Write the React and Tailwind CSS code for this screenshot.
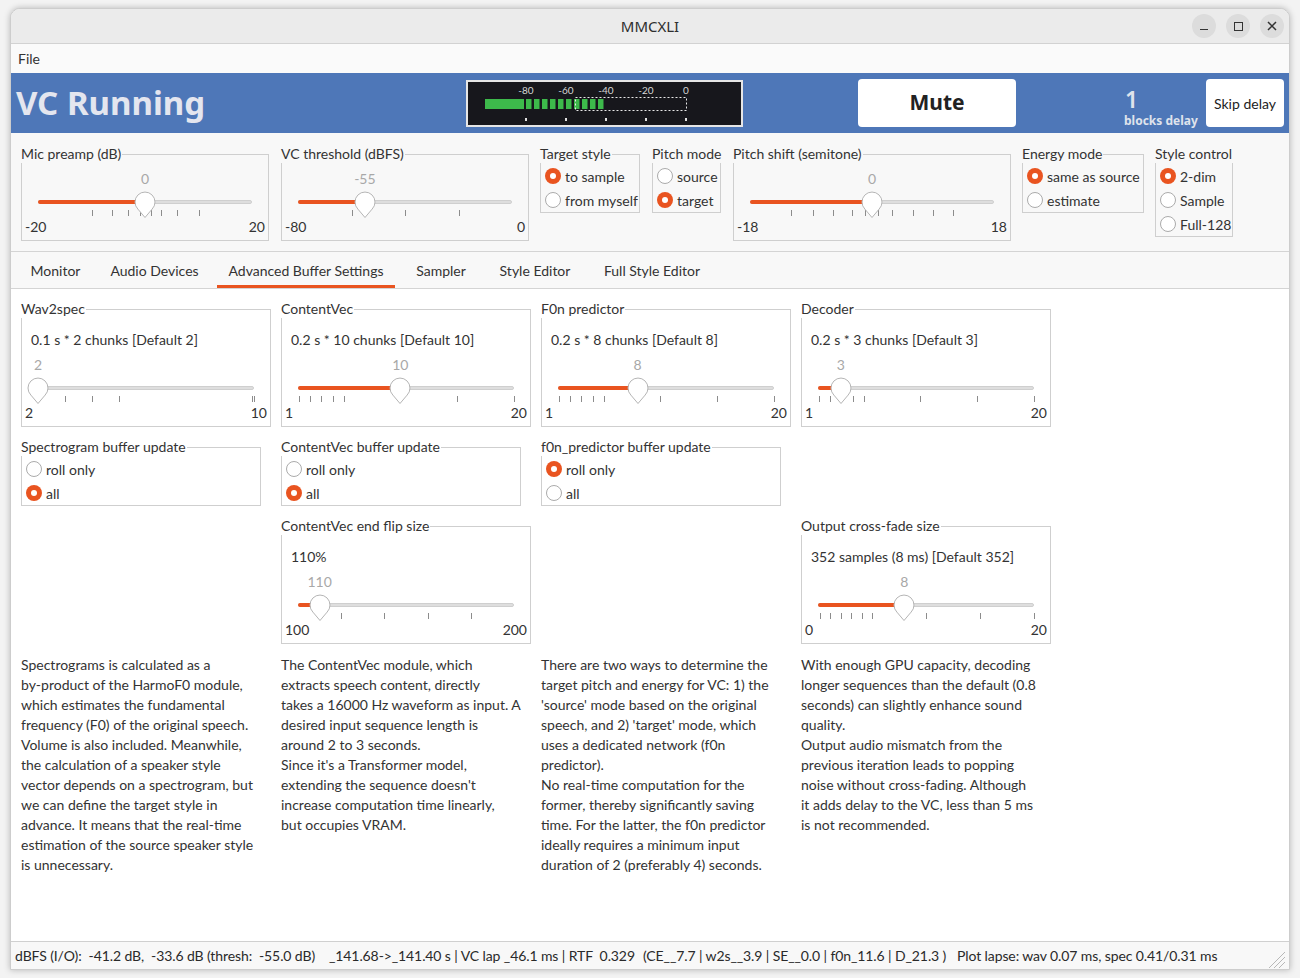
import React from "react";

// shared geometry for the sliders (percent of track width)
const micTicks = [25, 34.7, 42, 47.5, 49.5, 53, 57.4, 64.8, 75];
const vcTicks = [25, 50, 75];
const pitchTicks = [16.7, 25.7, 33.9, 42, 47.3, 52.6, 58.4, 67, 75, 83];
const wavTicks = [12.5, 25, 37.5, 99, 100];
const chunkTicks = [0.5, 5.6, 10.7, 16.3, 21.4, 47.4, 73.5, 100];
const flipTicks = [20, 40, 60, 80];
const fadeTicks = [1, 5.6, 10.5, 15.3, 20.3, 25, 50, 75, 100];

const Radio = ({ checked, label }) => (
  <div className="flex h-[24px] items-center gap-[4px]">
    {checked ? (
      <span className="flex h-[16px] w-[16px] items-center justify-center rounded-full bg-[#e95420]">
        <span className="h-[6px] w-[6px] rounded-full bg-white" />
      </span>
    ) : (
      <span className="h-[16px] w-[16px] rounded-full border border-[#ababab] bg-white" />
    )}
    <span className="whitespace-nowrap">{label}</span>
  </div>
);

const Group = ({ title, bg = "bg-[#f8f8f8]", className = "", children }) => (
  <div className={`relative pt-[9px] ${className}`}>
    <div className="border border-[#cfcfcf]">{children}</div>
    <span className={`absolute left-0 top-0 whitespace-nowrap pr-px leading-[18px] ${bg}`}>
      {title}
    </span>
  </div>
);

const Slider = ({ pct, value, min, max, ticks }) => (
  <div className="relative h-[68px]">
    <div className="absolute left-[16px] right-[16px] top-0 h-full">
      <span
        className="absolute top-0 -translate-x-1/2 leading-[20px] text-[#a8a8a8]"
        style={{ left: `${pct}%` }}
      >
        {value}
      </span>
      <div className="absolute left-0 right-0 top-[31px] h-[4px] rounded-full border border-[#cfcfcf] bg-[#dedede]" />
      <div
        className="absolute left-0 top-[31px] h-[4px] rounded-full bg-[#e95420]"
        style={{ width: `${pct}%` }}
      />
      {ticks.map((t) => (
        <div
          key={t}
          className="absolute top-[41px] h-[6px] w-px bg-[#8c8c8c]"
          style={{ left: `${t}%` }}
        />
      ))}
      <svg
        className="absolute top-[22px] -ml-[11px]"
        width="22"
        height="28"
        style={{ left: `${pct}%` }}
      >
        <path d="M11 26.5 L3.9 18.1 A10 10 0 1 1 18.1 18.1 Z" fill="#fff" stroke="#b5b5b5" />
      </svg>
    </div>
    <div className="absolute bottom-0 left-[3px] right-[3px] flex justify-between leading-[20px]">
      <span>{min}</span>
      <span>{max}</span>
    </div>
  </div>
);

const TopSlider = ({ title, width, ...rest }) => (
  <Group title={title} className={width}>
    <div className="pb-[3px] pt-[14px]">
      <Slider {...rest} />
    </div>
  </Group>
);

const BufferSlider = ({ title, caption, ...rest }) => (
  <Group title={title} bg="bg-white">
    <div className="pb-[3px] pt-[20px]">
      <div className="pl-[9px] leading-[20px]">{caption}</div>
      <div className="mt-[5px]">
        <Slider {...rest} />
      </div>
    </div>
  </Group>
);

const RadioBox = ({ title, items, className = "", bg }) => (
  <Group title={title} className={className} bg={bg}>
    <div className="pl-[4px] pt-[9px]">
      {items.map(([label, checked]) => (
        <Radio key={label} label={label} checked={checked} />
      ))}
    </div>
  </Group>
);

const Meter = () => {
  const segs = [60, 68, 76, 84, 92, 100, 108, 116, 124, 132];
  const marks = [
    [60, "-80"],
    [100, "-60"],
    [140, "-40"],
    [180, "-20"],
    [220, "0"],
  ];
  return (
    <svg width="277" height="47">
      <rect width="277" height="47" fill="#e6e6e6" />
      <rect x="2" y="2" width="273" height="43" fill="#17171c" />
      {marks.map(([x, l]) => (
        <text key={l} x={x} y="14" fontSize="10" fill="#d6d6d6" textAnchor="middle" fontFamily="Lato, sans-serif">
          {l}
        </text>
      ))}
      <rect x="19" y="19" width="39" height="10" fill="#3db94b" />
      {segs.map((x) => (
        <rect key={x} x={x} y="19" width="5.5" height="10" fill="#3db94b" />
      ))}
      <rect x="109.5" y="17.5" width="111" height="13" fill="none" stroke="#e8e8e8" strokeDasharray="2 2" />
      {marks.map(([x, l]) => (
        <rect key={l} x={x - 1} y="38" width="2" height="3" fill="#e0e0e0" />
      ))}
    </svg>
  );
};

const texts = [
  [
    "Spectrograms is calculated as a",
    "by-product of the HarmoF0 module,",
    "which estimates the fundamental",
    "frequency (F0) of the original speech.",
    "Volume is also included. Meanwhile,",
    "the calculation of a speaker style",
    "vector depends on a spectrogram, but",
    "we can define the target style in",
    "advance. It means that the real-time",
    "estimation of the source speaker style",
    "is unnecessary.",
  ],
  [
    "The ContentVec module, which",
    "extracts speech content, directly",
    "takes a 16000 Hz waveform as input. A",
    "desired input sequence length is",
    "around 2 to 3 seconds.",
    "Since it's a Transformer model,",
    "extending the sequence doesn't",
    "increase computation time linearly,",
    "but occupies VRAM.",
  ],
  [
    "There are two ways to determine the",
    "target pitch and energy for VC: 1) the",
    "'source' mode based on the original",
    "speech, and 2) 'target' mode, which",
    "uses a dedicated network (f0n",
    "predictor).",
    "No real-time computation for the",
    "former, thereby significantly saving",
    "time. For the latter, the f0n predictor",
    "ideally requires a minimum input",
    "duration of 2 (preferably 4) seconds.",
  ],
  [
    "With enough GPU capacity, decoding",
    "longer sequences than the default (0.8",
    "seconds) can slightly enhance sound",
    "quality.",
    "Output audio mismatch from the",
    "previous iteration leads to popping",
    "noise without cross-fading. Although",
    "it adds delay to the VC, less than 5 ms",
    "is not recommended.",
  ],
];

// tab label, tab width in px
const tabs = [
  ["Monitor", "w-[73px]"],
  ["Audio Devices", "w-[109px]"],
  ["Advanced Buffer Settings", "w-[178px]"],
  ["Sampler", "w-[76px]"],
  ["Style Editor", "w-[96px]"],
  ["Full Style Editor", "w-[122px]"],
];

export default function App() {
  return (
    <div className="h-[978px] bg-[#f3f3f3] px-[10px] pt-[8px] font-[Lato,'Noto_Sans',sans-serif] text-[14px] text-[#333]">
      <div className="flex h-[962px] w-[1280px] flex-col overflow-hidden rounded-t-[10px] border border-[#cdcdcd] bg-[#f8f8f8] shadow-[0_0_6px_rgba(0,0,0,0.25)]">
        {/* title bar */}
        <div className="grid h-[35px] shrink-0 grid-cols-[1fr_auto_1fr] items-center border-b border-[#d2d2d2] bg-[#ebebeb]">
          <div />
          <div className="font-['Noto_Sans',sans-serif] text-[15px] text-[#2e2e2e]">MMCXLI</div>
          <div className="flex justify-end gap-[10px] pr-[5px]">
            <span className="flex h-[24px] w-[24px] items-center justify-center rounded-full bg-[#dcdcdc]">
              <span className="mt-[7px] h-[1.5px] w-[8px] bg-[#333]" />
            </span>
            <span className="flex h-[24px] w-[24px] items-center justify-center rounded-full bg-[#dcdcdc]">
              <span className="h-[9px] w-[9px] border-[1.5px] border-[#333]" />
            </span>
            <span className="flex h-[24px] w-[24px] items-center justify-center rounded-full bg-[#dcdcdc]">
              <svg width="10" height="10" viewBox="0 0 10 10">
                <path d="M1 1 L9 9 M9 1 L1 9" stroke="#333" strokeWidth="1.5" />
              </svg>
            </span>
          </div>
        </div>

        {/* menu */}
        <div className="flex h-[29px] shrink-0 items-center bg-[#fafafa] pl-[7px]">File</div>

        {/* status header */}
        <div className="flex h-[60px] shrink-0 items-center bg-[#4e77b8] pl-[5px]">
          <div className="w-[450px] font-['Noto_Sans',sans-serif] text-[33px] font-bold text-[#e4e6ef]">VC Running</div>
          <Meter />
          <div className="w-[115px]" />
          <div className="flex h-[48px] w-[158px] items-center justify-center rounded-[4px] bg-white font-['Noto_Sans',sans-serif] text-[21px] font-bold text-[#222]">
            Mute
          </div>
          <div className="ml-[108px] flex w-[74px] flex-col self-end pb-[6px] text-[#dfe3ec]">
            <span className="pl-[1px] font-['Noto_Sans',sans-serif] text-[23px] font-semibold leading-[30px]">1</span>
            <span className="whitespace-nowrap font-['Noto_Sans',sans-serif] text-[12px] font-bold leading-[13px]">blocks delay</span>
          </div>
          <div className="ml-[8px] flex h-[48px] w-[78px] items-center justify-center rounded-[4px] bg-white text-[14px] text-[#222]">
            Skip delay
          </div>
        </div>

        {/* top controls */}
        <div className="flex h-[118px] shrink-0 items-start bg-[#f8f8f8] pl-[10px] pt-[12px]">
          <TopSlider title="Mic preamp (dB)" width="w-[248px]" pct={50} value="0" min="-20" max="20" ticks={micTicks} />
          <TopSlider title="VC threshold (dBFS)" width="ml-[12px] w-[248px]" pct={31.25} value="-55" min="-80" max="0" ticks={vcTicks} />
          <RadioBox title="Target style" className="ml-[11px] w-[100px]" items={[["to sample", true], ["from myself", false]]} />
          <RadioBox title="Pitch mode" className="ml-[12px] w-[69px]" items={[["source", false], ["target", true]]} />
          <TopSlider title="Pitch shift (semitone)" width="ml-[12px] w-[278px]" pct={50} value="0" min="-18" max="18" ticks={pitchTicks} />
          <RadioBox title="Energy mode" className="ml-[11px] w-[122px]" items={[["same as source", true], ["estimate", false]]} />
          <RadioBox title="Style control" className="ml-[11px] w-[78px]" items={[["2-dim", true], ["Sample", false], ["Full-128", false]]} />
        </div>

        {/* tabs */}
        <div className="flex h-[38px] shrink-0 gap-[8px] border-y border-[#d4d4d4] bg-[#f8f8f8] pl-[8px]">
          {tabs.map(([t, w]) => (
            <div key={t} className={`relative flex items-center justify-center whitespace-nowrap ${w}`}>
              {t}
              {t === "Advanced Buffer Settings" && (
                <span className="absolute bottom-0 left-0 right-0 h-[3px] bg-[#e95420]" />
              )}
            </div>
          ))}
        </div>

        {/* tab content */}
        <div className="flex-1 bg-white pl-[10px] pt-[11px]">
          <div className="grid grid-cols-[250px_250px_250px_250px] gap-x-[10px] gap-y-[11px]">
            <BufferSlider title="Wav2spec" caption="0.1 s * 2 chunks [Default 2]" pct={0} value="2" min="2" max="10" ticks={wavTicks} />
            <BufferSlider title="ContentVec" caption="0.2 s * 10 chunks [Default 10]" pct={47.37} value="10" min="1" max="20" ticks={chunkTicks} />
            <BufferSlider title="F0n predictor" caption="0.2 s * 8 chunks [Default 8]" pct={36.84} value="8" min="1" max="20" ticks={chunkTicks} />
            <BufferSlider title="Decoder" caption="0.2 s * 3 chunks [Default 3]" pct={10.53} value="3" min="1" max="20" ticks={chunkTicks} />

            <RadioBox title="Spectrogram buffer update" bg="bg-white" className="w-[240px]" items={[["roll only", false], ["all", true]]} />
            <RadioBox title="ContentVec buffer update" bg="bg-white" className="w-[240px]" items={[["roll only", false], ["all", true]]} />
            <RadioBox title="f0n_predictor buffer update" bg="bg-white" className="w-[240px]" items={[["roll only", true], ["all", false]]} />
            <div />

            <div />
            <BufferSlider title="ContentVec end flip size" caption="110%" pct={10} value="110" min="100" max="200" ticks={flipTicks} />
            <div />
            <BufferSlider title="Output cross-fade size" caption="352 samples (8 ms) [Default 352]" pct={40} value="8" min="0" max="20" ticks={fadeTicks} />

            {texts.map((lines, i) => (
              <div key={i} className="whitespace-nowrap leading-[20px]">
                {lines.map((l) => (
                  <div key={l}>{l}</div>
                ))}
              </div>
            ))}
          </div>
        </div>

        {/* status bar */}
        <div className="flex h-[28px] shrink-0 items-center whitespace-pre border-t border-[#d0d0d0] bg-[#f8f8f8] pl-[4px] text-[14px] tracking-[-0.1px] text-[#2a2a2a]">
          <span className="w-[314px]">dBFS (I/O):  -41.2 dB,  -33.6 dB (thresh:  -55.0 dB)</span>
          <span className="w-[314px]">_141.68-&gt;_141.40 s | VC lap _46.1 ms | RTF  0.329</span>
          <span className="w-[314px]">(CE__7.7 | w2s__3.9 | SE__0.0 | f0n_11.6 | D_21.3 )</span>
          <span>Plot lapse: wav 0.07 ms, spec 0.41/0.31 ms</span>
          <svg className="ml-auto mr-[3px] mt-[6px]" width="20" height="20" viewBox="0 0 20 20">
            <path d="M19 3 L3 19 M19 8 L8 19 M19 13 L13 19" stroke="#b8b8b8" strokeWidth="1" />
          </svg>
        </div>
      </div>
    </div>
  );
}
